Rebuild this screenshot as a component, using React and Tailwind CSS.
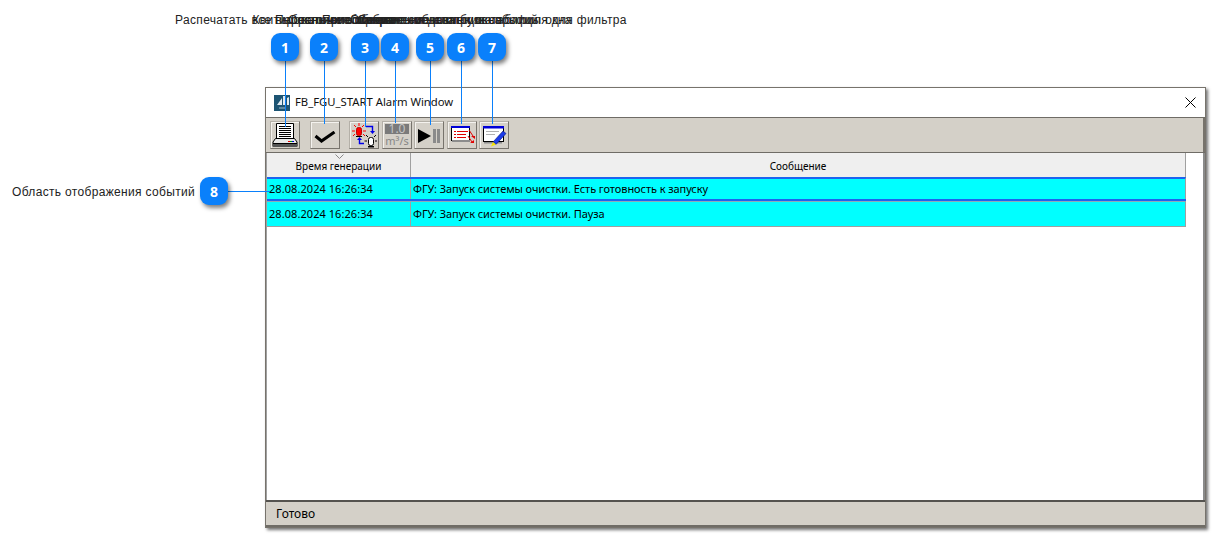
import React from 'react';

const markers = [
  { n: 1, x: 271, lineEnd: 127, label: 'Распечатать все выбранные события' },
  { n: 2, x: 310, lineEnd: 124, label: 'Квитировать сообщение' },
  { n: 3, x: 351, lineEnd: 127, label: 'Переключить мигание сигнала' },
  { n: 4, x: 381, lineEnd: 123, label: 'Состояние обновления данных окна' },
  { n: 5, x: 416, lineEnd: 125, label: 'Приостановить обновление событий' },
  { n: 6, x: 447, lineEnd: 124, label: 'Отображение столбцов таблицы окна' },
  { n: 7, x: 478, lineEnd: 124, label: 'Сохранение и загрузка профиля для фильтра' },
];

function Marker({ n, left, top }) {
  return (
    <div
      className="absolute flex h-7 w-7 items-center justify-center rounded-[9px] bg-[#0a80fb] font-['Noto_Sans',sans-serif] text-[14px] font-bold text-white shadow-[2px_3px_4px_rgba(0,0,0,0.5)]"
      style={{ left, top }}
    >
      {n}
    </div>
  );
}

function ToolButton({ className = '', children }) {
  return (
    <div className={`flex h-[28px] w-[30px] items-center justify-center border border-[#b4b0a8] border-b-[#77736c] border-r-[#77736c] bg-[#d4d0c8] shadow-[inset_1px_1px_0_#f4f2ee] ${className}`}>
      {children}
    </div>
  );
}

function PrinterIcon() {
  return (
    <svg width="26" height="26" viewBox="0 0 26 26">
      <path d="M4.500 1.500H21.500V17H4.500Z" fill="#fff" stroke="#000" />
      <path d="M7 4.500H19M7 6.500H19M7 8.500H19M7 10.500H19M7 12.500H19M7 14.500H19" stroke="#000" />
      <path d="M3.500 16.500H22.500L25 20V24.500H1V20Z" fill="#e8e8e8" stroke="#000" />
      <path d="M1 21.500H25" stroke="#000" />
      <rect x="1" y="22" width="24" height="3" fill="#555" />
      <path d="M16 19.500H18" stroke="#e00000" />
      <path d="M18 19.500H20" stroke="#00a000" />
      <path d="M20 19.500H22" stroke="#0000e0" />
    </svg>
  );
}

function CheckIcon() {
  return (
    <svg width="22" height="12" viewBox="0 0 22 12" className="mt-[4px]">
      <path d="M1.500 5L7.500 10L20.500 1" fill="none" stroke="#000" strokeWidth="3" />
    </svg>
  );
}

function AlarmIcon() {
  return (
    <svg width="26" height="26" viewBox="0 0 26 26">
      <rect x="5.500" y="5.500" width="5" height="8" rx="2" fill="#f00" stroke="#c00000" />
      <rect x="5" y="14" width="6" height="1" fill="#000" />
      <path d="M3 3L5 5M13 3L11 5M1 9H4M12 9H15M2 14L4 12M14 14L12 12M8 1V4" stroke="#f00" />
      <rect x="17.500" y="15.500" width="5" height="8" rx="2" fill="#fff" stroke="#000" />
      <rect x="17" y="24" width="6" height="1.500" fill="#000" />
      <path d="M15 13L17 15M25 13L23 15M13.500 19H16M24 19H26" stroke="#000" />
      <path d="M15 4.500H21.500V10" fill="none" stroke="#0000e8" strokeWidth="1.400" />
      <path d="M19 9L21.500 12L24 9Z" fill="#0000e8" />
      <path d="M13 21.500H8.500V17" fill="none" stroke="#0000e8" strokeWidth="1.400" />
      <path d="M6 18L8.500 15L11 18Z" fill="#0000e8" />
    </svg>
  );
}

function RateIcon() {
  return (
    <div className="flex w-[26px] flex-col items-center font-['Noto_Sans',sans-serif] text-[#868686]">
      <div className="flex h-[10px] w-[24px] items-center justify-center bg-[#7a7a7a] text-[12px] leading-none text-[#c4c4c4]">1.0</div>
      <div className="mt-[1px] text-[11px] leading-[12px]">m³/s</div>
    </div>
  );
}

function PauseIcon() {
  return (
    <svg width="26" height="16" viewBox="0 0 26 16" className="mt-[1px]">
      <path d="M2 1L15 8L2 15Z" fill="#000" />
      <rect x="17" y="1" width="3" height="14" fill="#8a8a8a" />
      <rect x="21" y="1" width="3" height="14" fill="#8a8a8a" />
    </svg>
  );
}

function ListIcon() {
  return (
    <svg width="26" height="24" viewBox="0 0 26 24">
      <rect x="2.500" y="3.500" width="18" height="14" fill="#fff" stroke="#000" />
      <rect x="2" y="3" width="19" height="2" fill="#0000d8" />
      <rect x="3" y="17" width="18" height="2" fill="#8c8c8c" />
      <path d="M5 8.500H7M8 8.500H19M5 11.500H7M8 11.500H17M5 14.500H7M8 14.500H17" stroke="#e00000" />
      <path d="M20 7L24 13M19 13L23 19" stroke="#e00000" />
      <path d="M22 13H26V16ZM21 20H25V17Z" fill="#e00000" />
    </svg>
  );
}

function EditIcon() {
  return (
    <svg width="26" height="26" viewBox="0 0 26 26">
      <rect x="2.500" y="4.500" width="20" height="15" fill="#fff" stroke="#000" />
      <rect x="2" y="4" width="21" height="2.500" fill="#0000d8" />
      <path d="M5 9.500H18M5 12.500H14" stroke="#b0b0b0" />
      <rect x="3" y="20" width="18" height="1.500" fill="#8c8c8c" />
      <path d="M12 20L22 9L25 11.500L15 22.500Z" fill="#1c3ce8" stroke="#001080" strokeWidth="0.600" />
      <path d="M10 24.500L12 20L15 22.500Z" fill="#f5e400" />
    </svg>
  );
}

export default function App() {
  return (
    <div className="relative h-[537px] w-[1216px] overflow-hidden bg-white font-['Liberation_Sans',sans-serif] text-black">
      {/* labels stacked on top of each other, same as the source page */}
      {markers.map((m) => (
        <div
          key={m.n}
          className="absolute top-[13px] whitespace-nowrap text-center text-[12px] leading-[14px] tracking-[0.33px] text-[#222]"
          style={{ left: m.x + 14, transform: 'translateX(-50%)' }}
        >
          {m.label}
        </div>
      ))}

      <div className="pl-[265px] pt-[87px]">
        <div className="flex h-[441px] w-[941px] flex-col border border-[#77736c] bg-white shadow-[2px_2px_3px_rgba(0,0,0,0.55)]">
          <div className="flex h-[29px] shrink-0 items-center justify-between pl-[8px] pr-[9px]">
            <div className="flex items-center gap-[5px]">
              <svg width="16" height="16" viewBox="0 0 16 16">
                <rect width="16" height="16" fill="#1d5473" />
                <path d="M3 10L8 3V10ZM9 10V1H12V10ZM13 10V3L15 2V10Z" fill="#dfeaf1" />
                <path d="M5 13H11" stroke="#9fbccd" />
              </svg>
              <span className="font-['Noto_Sans',sans-serif] text-[11.3px] text-[#111]">FB_FGU_START Alarm Window</span>
            </div>
            <svg width="11" height="11" viewBox="0 0 11 11" className="mb-[1px]">
              <path d="M0.500 0.500L10.500 10.500M10.500 0.500L0.500 10.500" stroke="#000" />
            </svg>
          </div>

          <div className="flex h-[36px] shrink-0 items-center border-y border-[#6f6c66] bg-[#d4d0c8] pl-[4px] shadow-[inset_-2px_0_0_#77736c]">
            <ToolButton><PrinterIcon /></ToolButton>
            <ToolButton className="ml-[10px]"><CheckIcon /></ToolButton>
            <ToolButton className="ml-[9px]"><AlarmIcon /></ToolButton>
            <ToolButton className="ml-[3px]"><RateIcon /></ToolButton>
            <ToolButton className="ml-[2px]"><PauseIcon /></ToolButton>
            <ToolButton className="ml-[3px]"><ListIcon /></ToolButton>
            <ToolButton className="ml-[2px]"><EditIcon /></ToolButton>
          </div>

          <div className="flex min-h-0 flex-1 border-r-2 border-[#8a8a8a]">
            <div className="w-[920px] border-l border-[#a0a0a0] font-['Noto_Sans',sans-serif] text-[11px]">
              <div className="relative flex h-[24px] border-r border-[#a0a0a0] bg-[#efefef] text-[10px]">
                <div className="flex w-[144px] items-center justify-center border-r border-[#a0a0a0] pt-[2px]">Время генерации</div>
                <svg width="9" height="5" viewBox="0 0 9 5" className="absolute left-[68px] top-[1px]">
                  <path d="M0.500 0.500L4.500 4.500L8.500 0.500" fill="none" stroke="#888" />
                </svg>
                <div className="flex flex-1 items-center justify-center pt-[2px]">Сообщение</div>
              </div>
              <div className="flex h-[22px] border-r border-t-[2px] border-r-[#a0a0a0] border-t-[#1c64ee] bg-[#00ffff]">
                <div className="flex w-[144px] items-center border-r border-[#a0a0a0] pl-[2px] pt-[1px] tracking-[0.06px]">28.08.2024 16:26:34</div>
                <div className="flex flex-1 items-center pl-[2px] pt-[1px] tracking-[-0.07px]">ФГУ: Запуск системы очистки. Есть готовность к запуску</div>
              </div>
              <div className="h-[2px] bg-[#1c64ee]" />
              <div className="flex h-[26px] border-b border-r border-t border-b-[#a0a0a0] border-r-[#a0a0a0] border-t-[#8fa8b8] bg-[#00ffff]">
                <div className="flex w-[144px] items-center border-r border-[#a0a0a0] pl-[2px] tracking-[0.06px]">28.08.2024 16:26:34</div>
                <div className="flex flex-1 items-center pl-[2px] tracking-[-0.07px]">ФГУ: Запуск системы очистки. Пауза</div>
              </div>
            </div>
          </div>

          <div className="flex h-[27px] shrink-0 items-center border-y-2 border-t-[#55534f] border-b-[#6f6c66] bg-[#d4d0c8] pl-[10px] pt-[1px] font-['Noto_Sans',sans-serif] text-[12px]">
            Готово
          </div>
        </div>
      </div>

      {/* callouts over the window */}
      {markers.map((m) => (
        <React.Fragment key={m.n}>
          <div className="absolute top-[61px] w-px bg-[#0a80fb]" style={{ left: m.x + 14, height: m.lineEnd - 61 }} />
          <Marker n={m.n} left={m.x} top={33} />
        </React.Fragment>
      ))}

      <div className="absolute left-[12px] top-[185px] whitespace-nowrap text-[12px] leading-[14px] tracking-[0.33px] text-[#222]">Область отображения событий</div>
      <div className="absolute left-[228px] top-[191px] h-px w-[42px] bg-[#0a80fb]" />
      <Marker n={8} left={200} top={177} />
    </div>
  );
}
